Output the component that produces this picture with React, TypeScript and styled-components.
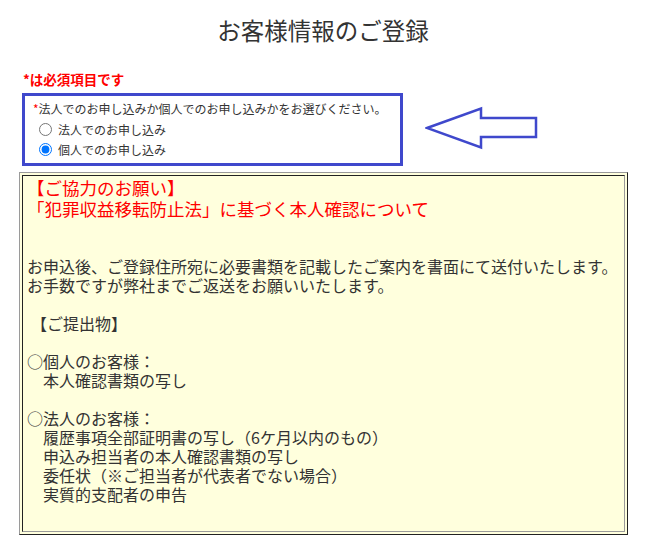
import React from "react";
import styled, { createGlobalStyle, css } from "styled-components";

const GlobalStyle = createGlobalStyle`
  html, body {
    margin: 0;
    padding: 0;
    background: #ffffff;
  }
  body {
    font-family: "Noto Sans CJK JP", "Noto Sans", sans-serif;
    color: #333333;
  }
`;

const Page = styled.div`
  padding: 18px 0 0 19px;
  width: 650px;
  box-sizing: border-box;
`;

const Title = styled.h1`
  margin: 0 0 29px -23px;
  font-size: 23.5px;
  line-height: 24px;
  font-weight: 400;
  color: #333333;
  text-align: center;
`;

const RequiredNote = styled.div`
  margin: 0 0 6px 4px;
  font-size: 13.5px;
  line-height: 16px;
  font-weight: 700;
  color: #ff0000;
`;

const ChoiceRow = styled.div`
  display: flex;
  align-items: flex-start;
  margin-left: 3px;
`;

const ChoiceBox = styled.div`
  box-sizing: border-box;
  width: 381px;
  border: 3px solid #3f48cc;
  padding: 3px 0 4px 8px;
  font-size: 12px;
  color: #333333;
`;

const Prompt = styled.div`
  line-height: 20px;
  white-space: nowrap;
`;

const Star = styled.span`
  color: #ff0000;
`;

const RadioLabel = styled.label`
  display: flex;
  align-items: center;
  height: 20px;
  padding-left: 6px;
  white-space: nowrap;
`;

const Radio = styled.input`
  width: 13px;
  height: 13px;
  margin: 0 6px 0 0;
`;

const ArrowSvg = styled.svg`
  display: block;
  margin: 13px 0 0 22px;
`;

const Notice = styled.div`
  box-sizing: border-box;
  width: 609px;
  margin-top: 6px;
  padding: 2px;
  background: #ffffdd;
  border: 1px solid;
  border-color: #9a9a9a #222222 #222222 #9a9a9a;
`;

const NoticeInner = styled.div`
  border: 1px solid;
  border-color: #222222 #9a9a9a #9a9a9a #222222;
  padding: 1px 4px 8px 4px;
  color: #333333;
`;

const Line = styled.div<{ $red?: boolean; $indent?: number }>`
  font-size: 16px;
  line-height: 19px;
  height: 19px;
  white-space: nowrap;
  padding-left: ${(p) => p.$indent ?? 0}px;
  ${(p) =>
    p.$red &&
    css`
      font-size: 17.5px;
      line-height: 21px;
      height: 21px;
      color: #ff0000;
    `}
`;

type LineData = { text: string; red?: boolean; indent?: number };

const lines: LineData[] = [
  { text: "【ご協力のお願い】", red: true },
  { text: "「犯罪収益移転防止法」に基づく本人確認について", red: true },
  { text: "" },
  { text: "" },
  { text: "お申込後、ご登録住所宛に必要書類を記載したご案内を書面にて送付いたします。" },
  { text: "お手数ですが弊社までご返送をお願いいたします。" },
  { text: "" },
  { text: "【ご提出物】", indent: 4 },
  { text: "" },
  { text: "○個人のお客様：" },
  { text: "本人確認書類の写し", indent: 16 },
  { text: "" },
  { text: "○法人のお客様：" },
  { text: "履歴事項全部証明書の写し（6ケ月以内のもの）", indent: 16 },
  { text: "申込み担当者の本人確認書類の写し", indent: 16 },
  { text: "委任状（※ご担当者が代表者でない場合）", indent: 16 },
  { text: "実質的支配者の申告", indent: 16 },
  { text: "" },
];

const Arrow = () => (
  <ArrowSvg width="114" height="44" viewBox="0 0 114 44">
    <polygon
      points="2,22 56,2.5 56,12 111,12 111,31 56,31 56,41.5"
      fill="none"
      stroke="#3f48cc"
      strokeWidth="2.5"
      strokeLinejoin="miter"
    />
  </ArrowSvg>
);

export default function App() {
  const [choice, setChoice] = React.useState("individual");
  return (
    <>
      <GlobalStyle />
      <Page>
        <Title>お客様情報のご登録</Title>
        <RequiredNote>*は必須項目です</RequiredNote>
        <ChoiceRow>
          <ChoiceBox>
            <Prompt>
              <Star>*</Star>法人でのお申し込みか個人でのお申し込みかをお選びください。
            </Prompt>
            <RadioLabel>
              <Radio
                type="radio"
                name="kind"
                checked={choice === "corporate"}
                onChange={() => setChoice("corporate")}
              />
              法人でのお申し込み
            </RadioLabel>
            <RadioLabel>
              <Radio
                type="radio"
                name="kind"
                checked={choice === "individual"}
                onChange={() => setChoice("individual")}
              />
              個人でのお申し込み
            </RadioLabel>
          </ChoiceBox>
          <Arrow />
        </ChoiceRow>
        <Notice>
          <NoticeInner>
            {lines.map((l, i) => (
              <Line key={i} $red={l.red} $indent={l.indent}>
                {l.text}
              </Line>
            ))}
          </NoticeInner>
        </Notice>
      </Page>
    </>
  );
}
